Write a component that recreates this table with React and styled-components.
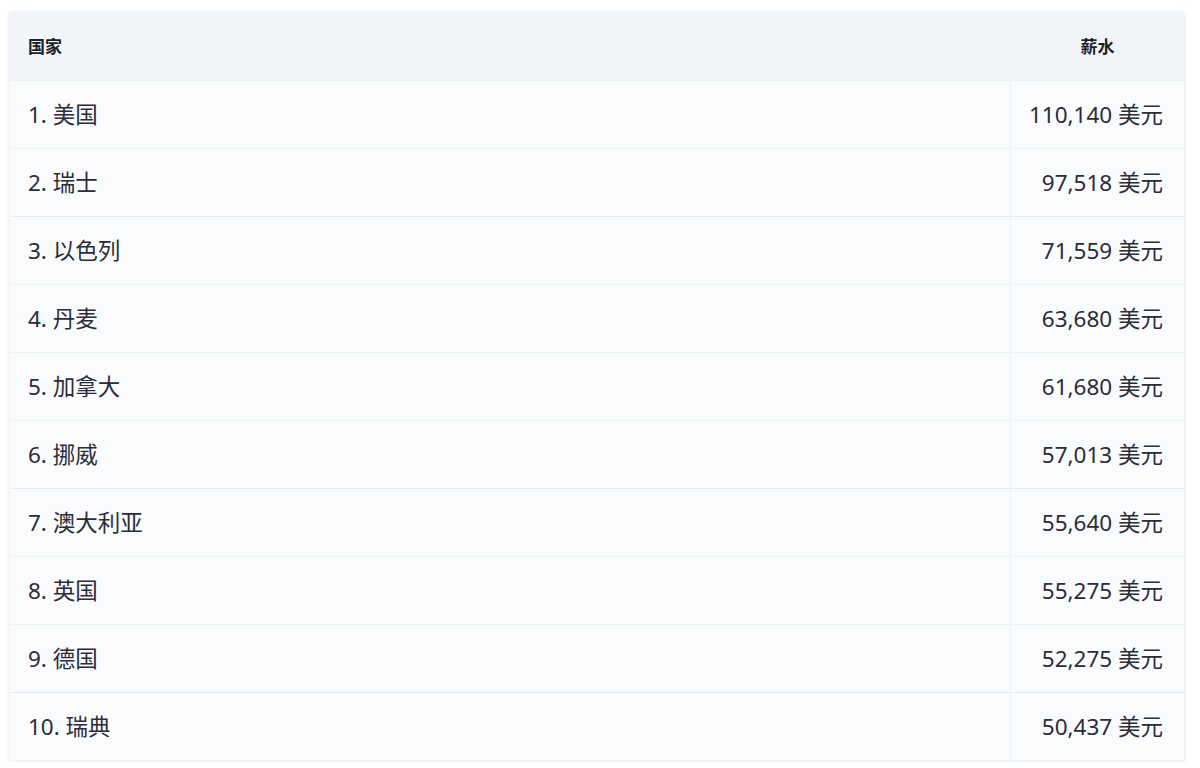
import React from 'react'
import styled, { createGlobalStyle } from 'styled-components'

const GlobalStyle = createGlobalStyle`
  body {
    margin: 0;
    background: #ffffff;
    font-family: "Noto Sans", "Noto Sans CJK SC", sans-serif;
  }
`

const Page = styled.div`
  width: 1200px;
  height: 768px;
  box-sizing: border-box;
  padding: 12px 15px 0 9px;
  background: #ffffff;
`

const Table = styled.div`
  border: 1px solid #eef1f6;
  box-shadow: 0 0 4px rgba(200, 210, 225, 0.35);
  background: #fafbfd;
`

const Row = styled.div`
  display: grid;
  grid-template-columns: 1000px 1fr;
  height: ${p => (p.$head ? '67px' : '68px')};
  background: ${p => (p.$head ? '#f1f4f9' : '#fafbfd')};
  border-top: ${p => (p.$head ? 'none' : `1px solid ${p.$strong ? '#e3ebf3' : '#eef1f5'}`)};
  box-sizing: border-box;
`

const Cell = styled.div`
  display: flex;
  align-items: center;
  justify-content: ${p => (p.$right ? 'flex-end' : 'flex-start')};
  padding: ${p => (p.$right ? '0 21px 3px 0' : '0 0 3px 18px')};
  border-left: ${p => (p.$right ? '1px solid #eef1f6' : 'none')};
  color: #2c2c3a;
  font-size: 22.5px;
  white-space: pre;
`

const HeadCell = styled(Cell)`
  font-size: 17px;
  font-weight: 700;
  color: #1f1f2a;
  justify-content: ${p => (p.$right ? 'center' : 'flex-start')};
  padding: ${p => (p.$right ? '0 0 3px 0' : '0 0 3px 18px')};
`

const rows = [
  ['1. 美国', '110,140 美元'],
  ['2. 瑞士', '97,518 美元'],
  ['3. 以色列', '71,559 美元'],
  ['4. 丹麦', '63,680 美元'],
  ['5. 加拿大', '61,680 美元'],
  ['6. 挪威', '57,013 美元'],
  ['7. 澳大利亚', '55,640 美元'],
  ['8. 英国', '55,275 美元'],
  ['9. 德国', '52,275 美元'],
  ['10. 瑞典', '50,437 美元'],
]

export default function App() {
  return (
    <>
      <GlobalStyle />
      <Page>
        <Table>
          <Row $head>
            <HeadCell>国家</HeadCell>
            <HeadCell $right>薪水</HeadCell>
          </Row>
          {rows.map(([country, pay], i) => (
            <Row key={country} $strong={i === 2 || i === 6 || i === 9}>
              <Cell>{country}</Cell>
              <Cell $right>{pay}</Cell>
            </Row>
          ))}
        </Table>
      </Page>
    </>
  )
}
